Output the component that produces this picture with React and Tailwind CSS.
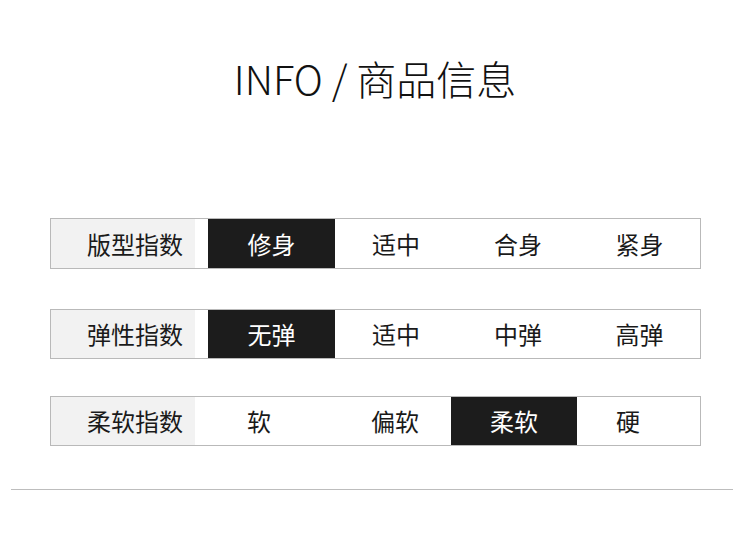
export default function App() {
  const font = { fontFamily: '"Noto Sans CJK SC", "Noto Sans", sans-serif' };
  return (
    <div className="w-[750px] h-[542px] bg-white relative overflow-hidden" style={font}>
      <div className="pt-[54px] h-[102px] flex justify-center">
        <div className="text-[40px] leading-[48px] font-light text-[#111] tracking-[0px]">INFO / 商品信息</div>
      </div>

      {/* Row 1 */}
      <div className="mt-[116px] ml-[50px] w-[651px] h-[51px] border border-[#b9b9b9] flex text-[24px] text-[#1a1a1a]">
        <div className="w-[144px] bg-[#f2f2f2] flex items-center pl-[36px]">版型指数</div>
        <div className="w-[13px]"></div>
        <div className="w-[127px] bg-[#1c1c1c] text-white flex items-center justify-center">修身</div>
        <div className="w-[122px] flex items-center justify-center">适中</div>
        <div className="w-[122px] flex items-center justify-center">合身</div>
        <div className="flex-1 flex items-center justify-center">紧身</div>
      </div>

      {/* Row 2 */}
      <div className="mt-[40px] ml-[50px] w-[651px] h-[50px] border border-[#b9b9b9] flex text-[24px] text-[#1a1a1a]">
        <div className="w-[144px] bg-[#f2f2f2] flex items-center pl-[36px]">弹性指数</div>
        <div className="w-[13px]"></div>
        <div className="w-[127px] bg-[#1c1c1c] text-white flex items-center justify-center">无弹</div>
        <div className="w-[122px] flex items-center justify-center">适中</div>
        <div className="w-[122px] flex items-center justify-center">中弹</div>
        <div className="flex-1 flex items-center justify-center">高弹</div>
      </div>

      {/* Row 3 */}
      <div className="mt-[37px] ml-[50px] w-[651px] h-[50px] border border-[#b9b9b9] flex text-[24px] text-[#1a1a1a]">
        <div className="w-[144px] bg-[#f2f2f2] flex items-center pl-[36px]">柔软指数</div>
        <div className="w-[128px] flex items-center justify-center">软</div>
        <div className="w-[128px] flex items-center justify-center pl-[16px]">偏软</div>
        <div className="w-[126px] bg-[#1c1c1c] text-white flex items-center justify-center">柔软</div>
        <div className="flex-1 flex items-center justify-center pr-[21px]">硬</div>
      </div>

      <div className="mt-[43px] ml-[11px] w-[722px] h-px bg-[#bdbdbd]"></div>
    </div>
  );
}
